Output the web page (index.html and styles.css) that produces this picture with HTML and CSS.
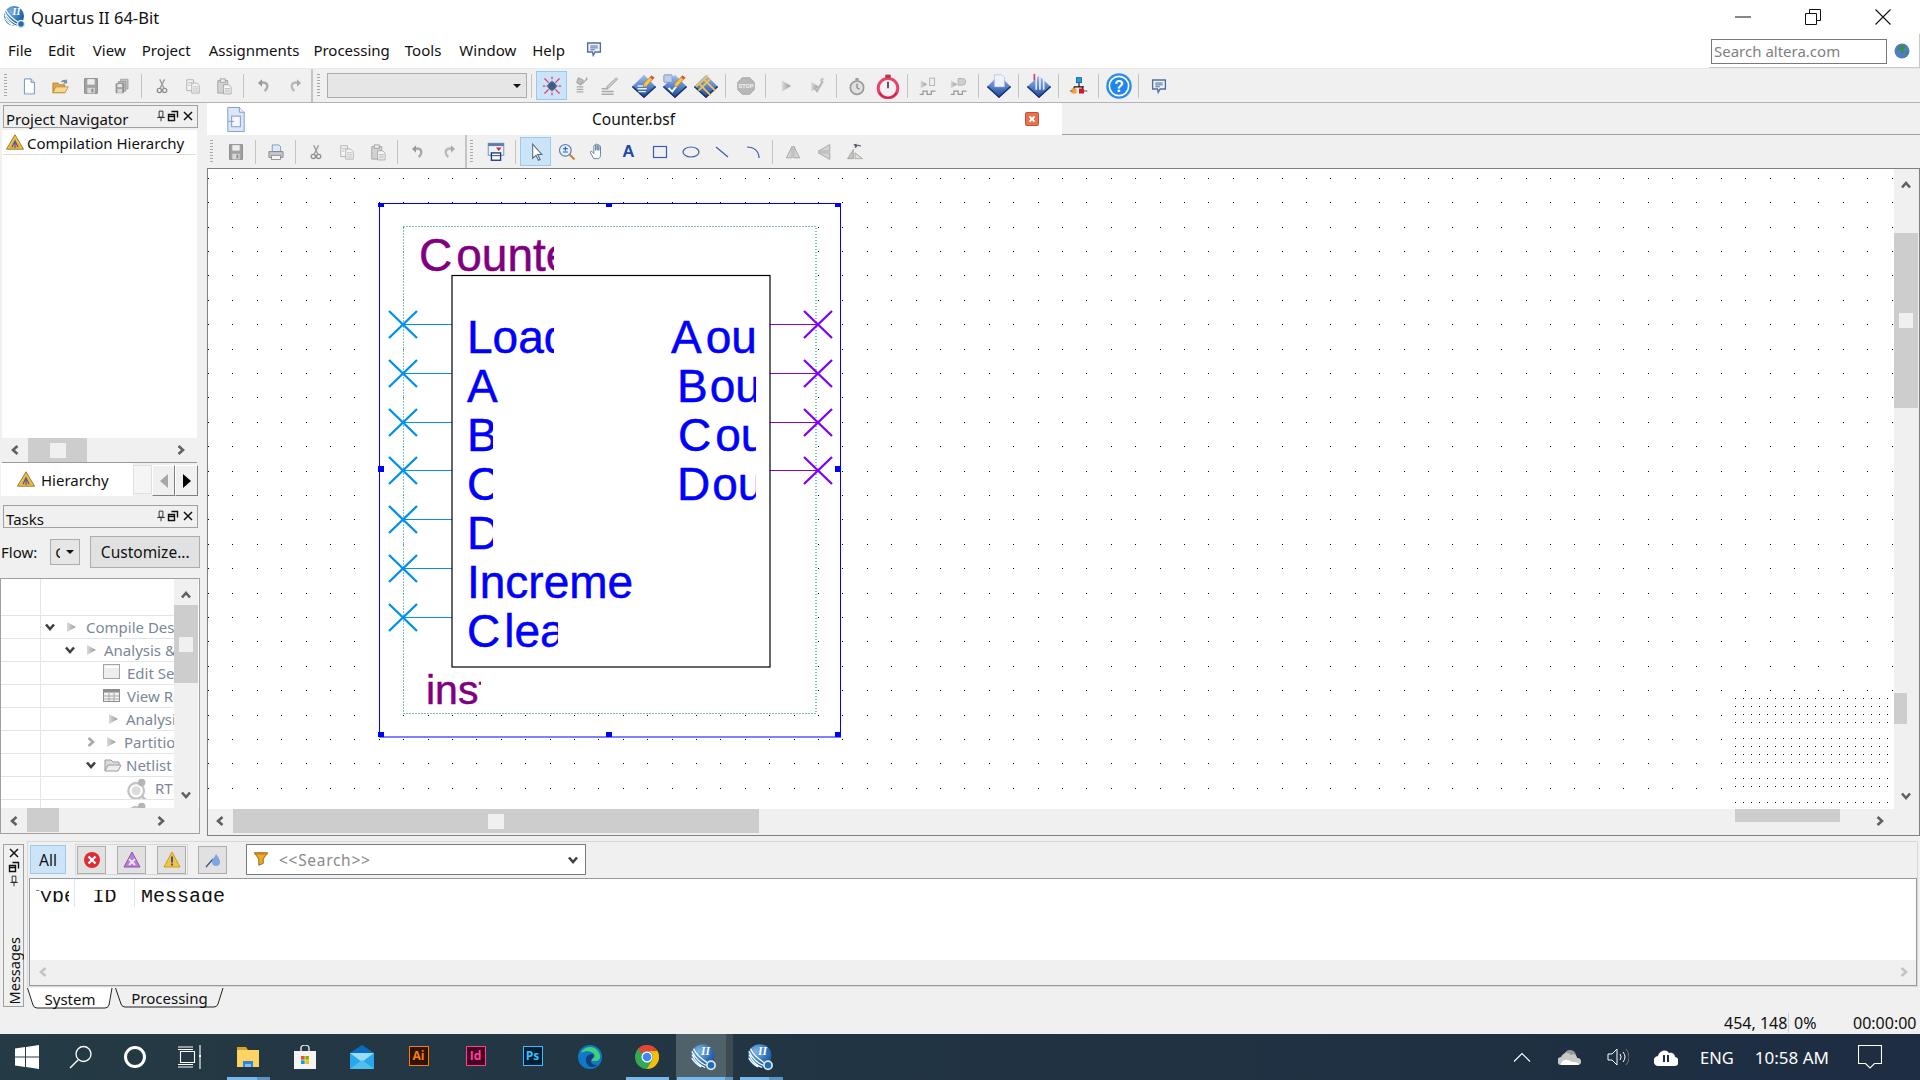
FILE: index.html
```html
<!DOCTYPE html>
<html lang="en">
<head>
<meta charset="utf-8">
<title>Quartus II 64-Bit</title>
<link rel="stylesheet" href="styles.css">
</head>
<body>
<svg class="defs" aria-hidden="true">
<defs>
<radialGradient id="gBlue" cx="35%" cy="30%" r="80%"><stop offset="0" stop-color="#7fb4e4"/><stop offset=".6" stop-color="#2f74b8"/><stop offset="1" stop-color="#134f8f"/></radialGradient>
<linearGradient id="gDia" x1="0" y1="0" x2="0" y2="1"><stop offset="0" stop-color="#a4c0ee"/><stop offset=".55" stop-color="#4f7ccc"/><stop offset="1" stop-color="#20417f"/></linearGradient>
<linearGradient id="gTri" x1="0" y1="0" x2="1" y2="0"><stop offset="0" stop-color="#dcdcdc"/><stop offset="1" stop-color="#969696"/></linearGradient>
<symbol id="i-quartus" viewBox="0 0 24 24"><circle cx="11" cy="11" r="10" fill="url(#gBlue)"/><path d="M2 10c2 5 6 9 11 11M1.500 7c3 6 7 10 13 12.500M3 5c3 6 7 9 12 12M1.500 13c2 3 5 6 8 7.500" stroke="#fff" stroke-width="1.100" fill="none"/><circle cx="18" cy="19" r="3.500" fill="#1c6fb5" stroke="#dfe5ea" stroke-width="1.500"/><text x="9.500" y="10" font-family="Liberation Serif" font-weight="700" font-style="italic" font-size="10" fill="#fff">II</text></symbol>
<symbol id="i-new" viewBox="0 0 24 24"><path d="M6.500 3.500h8l4 4v14h-12z" fill="#fff" stroke="#5b7fb5"/><path d="M14.500 3.500v4h4" fill="#dbe6f5" stroke="#5b7fb5"/><path d="M7.500 20.500h10" stroke="#cfdcef"/></symbol>
<symbol id="i-open" viewBox="0 0 24 24"><path d="M3.500 20V8.500h6l2 2h6V20z" fill="#e0a94a" stroke="#a97a2c"/><path d="M3.500 20l3.500-7h15l-4 7z" fill="#f6d98d" stroke="#b98b3a"/><path d="M13 8c1-3 3.500-4 6-3l1.500-1.500V9h-5l1.500-1.500c-1.500-.7-3-.2-4 .5z" fill="#7d8fa5"/></symbol>
<symbol id="i-save" viewBox="0 0 24 24"><path d="M5 4h14v16H5z" fill="#a2a2a2" stroke="#858585"/><rect x="8" y="4.500" width="8" height="6" fill="#ededed"/><rect x="8" y="14" width="8" height="6" fill="#d8d8d8"/><rect x="12.500" y="15" width="2" height="4" fill="#8a8a8a"/></symbol>
<symbol id="i-saveall" viewBox="0 0 24 24"><path d="M10 3h10v13H10z" fill="#c2c2c2" stroke="#999"/><path d="M7 6h10v13H7z" fill="#b4b4b4" stroke="#999"/><path d="M4 9h10v12H4z" fill="#a2a2a2" stroke="#858585"/><rect x="6" y="9.500" width="6" height="4" fill="#e8e8e8"/><rect x="6" y="16" width="6" height="5" fill="#d8d8d8"/></symbol>
<symbol id="i-cut" viewBox="0 0 24 24"><path d="M9 3l5.500 12M15.500 3L9.500 15" stroke="#a0a0a0" stroke-width="2" fill="none"/><circle cx="8.500" cy="18" r="2.800" fill="none" stroke="#909090" stroke-width="1.800"/><circle cx="15.500" cy="18" r="2.800" fill="none" stroke="#909090" stroke-width="1.800"/></symbol>
<symbol id="i-copy" viewBox="0 0 24 24"><path d="M4.500 4.500h8v13h-8z" fill="#f4f4f4" stroke="#a8a8a8"/><path d="M10.500 8.500h6l3 3v9h-9z" fill="#f4f4f4" stroke="#a8a8a8"/><path d="M6 8h5M6 11h3M12 13h6M12 15.500h6M12 18h6" stroke="#b4b4b4"/></symbol>
<symbol id="i-paste" viewBox="0 0 24 24"><path d="M4.500 5.500h12v15h-12z" fill="#d2d2d2" stroke="#9c9c9c"/><rect x="7.500" y="3.500" width="6" height="4" fill="#eee" stroke="#999"/><path d="M11.500 10.500h6l3 3v8h-9z" fill="#f7f7f7" stroke="#a0a0a0"/><path d="M13 15h6M13 17h6M13 19h6" stroke="#b4b4b4"/></symbol>
<symbol id="i-undo" viewBox="0 0 24 24"><path d="M6 7.500c6-2 11 0 11 5 0 3-1.500 5-4 7" fill="none" stroke="#a8a8a8" stroke-width="3.500"/><path d="M9 2L3 7.500 9 13z" fill="#999"/></symbol>
<symbol id="i-redo" viewBox="0 0 24 24"><path d="M18 7.500c-6-2-11 0-11 5 0 3 1.500 5 4 7" fill="none" stroke="#b8b8b8" stroke-width="3.500"/><path d="M15 2l6 5.500L15 13z" fill="#aaa"/></symbol>
<symbol id="i-target" viewBox="0 0 24 24"><path d="M12 5l7 7-7 7-7-7z" fill="#6d819f"/><circle cx="12" cy="12" r="4.500" fill="#3e5a85"/><path d="M3 3l5 5M21 3l-5 5M3 21l5-5M21 21l-5-5M12 1v3M12 20v3M1 12h3M20 12h3" stroke="#f0306a" stroke-width="1.500"/></symbol>
<symbol id="i-chip" viewBox="0 0 24 24"><path d="M10 2l6 3-3 6-5-3z" fill="#bcbcbc" stroke="#999"/><path d="M19 2l1.500 1.500-6 6" stroke="#a8a8a8" stroke-width="1.500" fill="none"/><path d="M8 13h8M8 16h8M8 19h8" stroke="#a8a8a8" stroke-width="1.500"/></symbol>
<symbol id="i-pen" viewBox="0 0 24 24"><path d="M20 3l1.500 1.500L12 14l-3 1 1-3z" fill="#c8c8c8" stroke="#999" stroke-width=".8"/><path d="M4 15h7M4 18h13M4 21h13" stroke="#aaa" stroke-width="1.500"/></symbol>
<symbol id="i-d1" viewBox="0 0 28 28"><path d="M14 2L27 15 14 27 1 15z" fill="url(#gDia)"/><path d="M14 27L1 15l1-1 12 11 12-11 1 1z" fill="#193267"/><path d="M7 14h10M7 17h10M8 20h8" stroke="#e8eef8" stroke-width="1.500"/><path d="M22 3l3 2-8 9-4 1 1-4z" fill="#f6c644" stroke="#9b6d10" stroke-width=".6"/><path d="M22 3l3 2-1.500 2-3-2z" fill="#e24a4a"/></symbol>
<symbol id="i-d2" viewBox="0 0 28 28"><path d="M14 2L27 15 14 27 1 15z" fill="url(#gDia)"/><path d="M14 27L1 15l1-1 12 11 12-11 1 1z" fill="#193267"/><rect x="2" y="2" width="9" height="8" rx="1" fill="#bfcde8" stroke="#7f95bf"/><path d="M7 16l4 4 6-8" fill="none" stroke="#fff" stroke-width="2"/><path d="M22 3l3 2-8 9-4 1 1-4z" fill="#f6c644" stroke="#9b6d10" stroke-width=".6"/><path d="M22 3l3 2-1.500 2-3-2z" fill="#e24a4a"/></symbol>
<symbol id="i-d3" viewBox="0 0 28 28"><path d="M14 2L27 15 14 27 1 15z" fill="url(#gDia)"/><path d="M14 27L1 15l1-1 12 11 12-11 1 1z" fill="#193267"/><path d="M6 11l13 13M11 6l13 13M6 19L19 6M3 15L16 3" stroke="#f2c44a" stroke-width="2" fill="none"/></symbol>
<symbol id="i-stop" viewBox="0 0 24 24"><path d="M8 3h8l5 5v8l-5 5H8l-5-5V8z" fill="#b8b8b8" stroke="#a4a4a4"/><text x="12" y="14" text-anchor="middle" font-family="Liberation Sans" font-size="6" font-weight="700" fill="#f4f4f4">STOP</text></symbol>
<symbol id="i-play" viewBox="0 0 24 24"><path d="M7 5l11 7-11 7z" fill="url(#gTri)"/></symbol>
<symbol id="i-check" viewBox="0 0 24 24"><path d="M5 7l9 6-9 6z" fill="url(#gTri)"/><path d="M9 14l3 4 7-12" fill="none" stroke="#b4b4b4" stroke-width="2.500"/><path d="M18 2l2.500 1.500-3 3-2.500-1z" fill="#c2c2c2"/></symbol>
<symbol id="i-timer" viewBox="0 0 24 24"><circle cx="12" cy="14" r="8" fill="#e0e0e0" stroke="#9a9a9a" stroke-width="2"/><rect x="10" y="2.500" width="4" height="3" fill="#9a9a9a"/><path d="M12 9v5l3 2" stroke="#888" stroke-width="1.500" fill="none"/></symbol>
<symbol id="i-timer2" viewBox="0 0 24 24"><circle cx="12" cy="14" r="9" fill="#f7f0f3" stroke="#e8456c" stroke-width="2.800"/><rect x="9.500" y="1.500" width="5" height="3" fill="#b8304f"/><path d="M12 8v6" stroke="#555" stroke-width="1.800"/><path d="M4 18a9 9 0 0016 0" stroke="#c7214a" stroke-width="1.500" fill="none"/></symbol>
<symbol id="i-wave1" viewBox="0 0 24 24"><path d="M3 5l8 5-8 5z" fill="url(#gTri)"/><rect x="14" y="2.500" width="6" height="9" fill="#eee" stroke="#aaa"/><path d="M2 22h4v-4h5v4h5v-4h5" fill="none" stroke="#999" stroke-width="1.500"/></symbol>
<symbol id="i-wave2" viewBox="0 0 24 24"><path d="M2 5l8 5-8 5z" fill="url(#gTri)"/><path d="M11 3h5a4 4 0 010 8h-5z" fill="#d0d0d0" stroke="#aaa"/><path d="M2 22h4v-4h5v4h5v-4h5" fill="none" stroke="#999" stroke-width="1.500"/></symbol>
<symbol id="i-p1" viewBox="0 0 28 28"><path d="M14 2L27 15 14 27 1 15z" fill="url(#gDia)"/><path d="M14 27L1 15l1-1 12 11 12-11 1 1z" fill="#193267"/><path d="M9 2h8l3 3v10H9z" fill="#eef2fa" stroke="#9bb0d6" stroke-width=".6"/></symbol>
<symbol id="i-p2" viewBox="0 0 28 28"><path d="M14 3L27 15 14 27 1 15z" fill="url(#gDia)"/><path d="M14 27L1 15l1-1 12 11 12-11 1 1z" fill="#193267"/><path d="M11 1v17M15 1v17M19 5v13" stroke="#e6edf8" stroke-width="1.800"/><path d="M9 1v7" stroke="#d9425e" stroke-width="1.800"/></symbol>
<symbol id="i-hier" viewBox="0 0 24 24"><rect x="9" y="2" width="6" height="6" fill="#1f9be0" stroke="#0b5e96"/><path d="M12 8v5M6 13h12M6 13v3M16 13v3" stroke="#111" stroke-width="1.300" fill="none"/><rect x="3" y="15" width="6" height="6" fill="#f5a030"/><rect x="12" y="15" width="6" height="6" fill="#e0122e"/><path d="M1 18h3M18 18h4" stroke="#333"/></symbol>
<symbol id="i-help" viewBox="0 0 28 28"><circle cx="14" cy="14" r="12.500" fill="#fff" stroke="#2b8cf0" stroke-width="2.500"/><circle cx="14" cy="14" r="9.500" fill="#1e86ec"/><text x="14" y="20" text-anchor="middle" font-family="Liberation Sans" font-size="17" font-weight="700" fill="#fff">?</text></symbol>
<symbol id="i-chat" viewBox="0 0 24 24"><path d="M3.500 4h17v12h-7l-2.500 4.500-1-4.500h-6.500z" fill="#eef3fb" stroke="#4f6f9c" stroke-width="1.800"/><path d="M7 8h10M7 10.500h10M7 13h6" stroke="#3f5f8c" stroke-width="1.200"/></symbol>
<symbol id="i-print" viewBox="0 0 24 24"><path d="M7.500 3.500h8l2 2v6h-10z" fill="#dfe8f5" stroke="#7490bb"/><path d="M3.500 11.500h17v7h-17z" fill="#c7c7c7" stroke="#7f7f7f"/><rect x="6.500" y="16" width="11" height="5" fill="#f4f4f4" stroke="#888"/></symbol>
<symbol id="i-sym" viewBox="0 0 24 24"><rect x="3.500" y="2.500" width="17" height="13" fill="#eef3fb" stroke="#7289b0"/><rect x="3.500" y="2.500" width="17" height="3" fill="#5d7cae"/><path d="M12 7h6l-3 4z" fill="#d6243e"/><rect x="7" y="13" width="10" height="8" fill="#fff" stroke="#1d3f78" stroke-width="1.500"/><path d="M7 16h10" stroke="#1d3f78"/></symbol>
<symbol id="i-cursor" viewBox="0 0 24 24"><path d="M8 2.500v17l4-3.500 3 6 2-1-3-6h5z" fill="#fff" stroke="#5c6b82" stroke-width="1.300"/></symbol>
<symbol id="i-zoom" viewBox="0 0 24 24"><circle cx="10" cy="10" r="7" fill="#e5f0fb" stroke="#5b7fb5" stroke-width="1.400"/><path d="M7 8h6M7 12h6M10 5.500v5" stroke="#2b5597" stroke-width="1.300"/><path d="M15 15l6 6" stroke="#c9853a" stroke-width="2.500"/></symbol>
<symbol id="i-hand" viewBox="0 0 24 24"><path d="M7 20l-4-7c-.8-1.500 1-2.500 2-1.500l2 2.500V5c0-1.500 2-1.500 2 0v5-6.500c0-1.500 2-1.500 2 0V10 4c0-1.500 2-1.500 2 0v6-4.500c0-1.500 2-1.500 2 0V15c0 3-1 4-2 5z" fill="#fff" stroke="#6d83a6" stroke-width="1.200"/></symbol>
<symbol id="i-rect" viewBox="0 0 24 24"><rect x="5.500" y="6.500" width="13" height="11" fill="none" stroke="#3d5cab" stroke-width="1.200"/></symbol>
<symbol id="i-ell" viewBox="0 0 24 24"><ellipse cx="12" cy="12" rx="8" ry="5" fill="none" stroke="#3d5cab" stroke-width="1.200"/></symbol>
<symbol id="i-line" viewBox="0 0 24 24"><path d="M6 7l12 10" stroke="#3d5cab" stroke-width="1.200"/></symbol>
<symbol id="i-arc" viewBox="0 0 24 24"><path d="M6 7c7 0 12 4 12 11" fill="none" stroke="#3d5cab" stroke-width="1.200"/></symbol>
<symbol id="i-fliph" viewBox="0 0 24 24"><path d="M11 5v14H4zM13 5v14h7z" fill="#d2d2d2" stroke="#a0a0a0"/></symbol>
<symbol id="i-flipv" viewBox="0 0 24 24"><path d="M19 3v8H5zM19 13v8L5 13z" fill="#d2d2d2" stroke="#a0a0a0"/></symbol>
<symbol id="i-rot" viewBox="0 0 24 24"><path d="M10 9v11H3z" fill="#c4c4c4" stroke="#a0a0a0"/><path d="M12 13v7h9z" fill="#e0e0e0" stroke="#a0a0a0"/><path d="M12 7c1-3 4-4 7-2" fill="none" stroke="#667" stroke-width="1.500"/><path d="M10 3l4-1 0 5z" fill="#556"/></symbol>
<symbol id="i-warn" viewBox="0 0 18 16"><path d="M9 .8l8.500 14.400H.5z" fill="#f3c33b" stroke="#8d7a4a"/><path d="M9 4l5.500 10h-11z" fill="#f5a72e"/><path d="M6 13l3-6 3 6M9 8v6" stroke="#3b5bb5" stroke-width="1.100" fill="none"/></symbol>
<symbol id="i-filefile" viewBox="0 0 24 28"><path d="M3.500 1.500h12l5 5v20h-17z" fill="#dce7f6" stroke="#7e9bc8"/><path d="M15.500 1.500v5h5" fill="#eef3fb" stroke="#7e9bc8"/><rect x="7.500" y="10.500" width="9" height="11" fill="#f4f7fc" stroke="#7e9bc8"/><path d="M4 16h6" stroke="#7e9bc8"/></symbol>
<symbol id="i-closetab" viewBox="0 0 14 14"><rect x=".5" y=".5" width="13" height="13" rx="1" fill="#e9714f" stroke="#c54f36"/><path d="M4.500 4.500l5 5M9.500 4.500l-5 5" stroke="#fff" stroke-width="2"/></symbol>
<symbol id="i-globe" viewBox="0 0 16 16"><circle cx="8" cy="8" r="7.500" fill="#4f7ccc"/><path d="M4 4l6-2.500 1.500 3-2.500 2 1.500 2-2.500 3-1-3.500-3-1z" fill="#3d9143"/><path d="M11.500 9l2.500-1.500 0 3-2.500 2.500z" fill="#3d9143"/></symbol>
<symbol id="i-pin" viewBox="0 0 12 16"><path d="M3.500 1.500h5v8h-5zM1 10h10M6 10v5" fill="none" stroke="#222" stroke-width="1.200"/></symbol>
<symbol id="i-float" viewBox="0 0 12 12"><path d="M4.500 1.500h6v6M1.500 4.500h6v6h-6zM1.500 6.500h6" fill="none" stroke="#111" stroke-width="1.400"/></symbol>
<symbol id="i-x" viewBox="0 0 12 12"><path d="M2 2l8 8M10 2l-8 8" stroke="#111" stroke-width="1.500"/></symbol>
<symbol id="i-chev" viewBox="0 0 14 14"><path d="M3 9.500l4-4.500 4 4.500" fill="none" stroke="currentColor" stroke-width="2.600"/></symbol>
<symbol id="i-tri" viewBox="0 0 12 12"><path d="M2 1l9 5-9 5z" fill="url(#gTri)"/></symbol>
<symbol id="i-win" viewBox="0 0 18 18"><rect x=".5" y=".5" width="16" height="14" fill="#eee" stroke="#a4a4a4"/><rect x="2" y="2" width="14" height="2" fill="#fff"/></symbol>
<symbol id="i-table" viewBox="0 0 18 18"><rect x=".5" y="2.500" width="16" height="12" fill="#f2f2f2" stroke="#8e8e8e"/><rect x=".5" y="2.500" width="16" height="3" fill="#8e8e8e"/><path d="M1 9h15M1 12h15M6 6v8M11 6v8" stroke="#a8a8a8"/></symbol>
<symbol id="i-foldr" viewBox="0 0 18 18"><path d="M1 15V4h6l2 2h6v3" fill="#ddd" stroke="#9a9a9a"/><path d="M1 15l3-6h13l-3 6z" fill="#eee" stroke="#9a9a9a"/></symbol>
<symbol id="i-rtl" viewBox="0 0 26 26"><circle cx="11" cy="15" r="8.500" fill="none" stroke="#c4c4c4" stroke-width="2.500"/><circle cx="11" cy="15" r="5" fill="#dcdcdc"/><circle cx="17" cy="6" r="4" fill="#b5b5b5"/><path d="M17 21l5 4" stroke="#bbb" stroke-width="2.500"/></symbol>
<symbol id="i-funnel" viewBox="0 0 18 18"><path d="M1.500 2h15l-5 7v5l-5 2V9z" fill="#f0a823" stroke="#8a6016"/><path d="M1.500 2h15v2h-15z" fill="#cf7f1a"/></symbol>
<symbol id="i-err" viewBox="0 0 18 18"><circle cx="9" cy="9" r="8" fill="#e02a36"/><path d="M5.500 5.500l7 7M12.500 5.500l-7 7" stroke="#fff" stroke-width="2.400"/></symbol>
<symbol id="i-crit" viewBox="0 0 18 18"><path d="M9 1l8 15H1z" fill="#b77fd6" stroke="#8b55a8"/><path d="M6 8l6 6M12 8l-6 6" stroke="#efe2f6" stroke-width="1.800"/></symbol>
<symbol id="i-warn2" viewBox="0 0 18 18"><path d="M9 1l8 15H1z" fill="#f8c33a" stroke="#cf9a1a"/><rect x="8" y="5.500" width="2" height="6" fill="#2a56b8"/><rect x="8" y="12.500" width="2" height="2" fill="#2a56b8"/></symbol>
<symbol id="i-sup" viewBox="0 0 18 18"><path d="M2 16L9 8" stroke="#3a557f" stroke-width="1.300"/><path d="M12 3c2 3 4 5 4 8a4 4 0 01-8 0c0-3 3-5 4-8z" fill="#7fa6e0"/></symbol>
<symbol id="t-start" viewBox="0 0 24 24"><path d="M0 3.500l10-1.400V11.500H0zM11 2L24 0v11.500H11zM0 12.500h10v9.400L0 20.500zM11 12.500h13V24l-13-2z" fill="#fff"/></symbol>
<symbol id="t-search" viewBox="0 0 24 24"><circle cx="14.500" cy="9" r="7.500" fill="none" stroke="#fff" stroke-width="1.300"/><path d="M9 15l-8 8" stroke="#fff" stroke-width="1.500"/></symbol>
<symbol id="t-ring" viewBox="0 0 24 24"><circle cx="12" cy="12" r="9.500" fill="none" stroke="#fff" stroke-width="3"/></symbol>
<symbol id="t-view" viewBox="0 0 24 24"><path d="M3.500 6.500h14v11h-14zM1 2h15M1 4.500h15M1 19.500h15M1 22h15M23 0v9M23 13v11" stroke="#fff" stroke-width="1.100" fill="none"/><rect x="22" y="9.500" width="2" height="3" fill="#fff"/></symbol>
<symbol id="t-explorer" viewBox="0 0 24 24"><path d="M1 2h9l2 3H1z" fill="#d8a12a"/><rect x="1" y="5" width="22" height="17" fill="#fbd463"/><path d="M7 22v-6h10v6z" fill="#2e86d8"/><rect x="9" y="19" width="6" height="3" fill="#7fc2f2"/></symbol>
<symbol id="t-store" viewBox="0 0 24 24"><rect x="1" y="6" width="22" height="18" fill="#f4f4f4"/><path d="M8 6V3a4 3 0 018 0v3" fill="none" stroke="#ddd" stroke-width="1.500"/><rect x="8" y="11" width="3.700" height="3.700" fill="#f25022"/><rect x="12.300" y="11" width="3.700" height="3.700" fill="#7fba00"/><rect x="8" y="15.300" width="3.700" height="3.700" fill="#00a4ef"/><rect x="12.300" y="15.300" width="3.700" height="3.700" fill="#ffb900"/></symbol>
<symbol id="t-mail" viewBox="0 0 24 24"><path d="M12 0l12 8H0z" fill="#0a6cc0"/><rect y="8" width="24" height="16" fill="#28a8ea"/><path d="M0 8l12 9 12-9" fill="#9adcf7"/><path d="M0 24l12-9 12 9z" fill="#50bfef"/></symbol>
<symbol id="t-edge" viewBox="0 0 24 24"><circle cx="12" cy="12" r="12" fill="#0f78c8"/><path d="M3 8c3-7 13-8 17-2 3 4 3 9-1 10h-6c1-3 5-3 3-7-2-3-8-4-13-1z" fill="#3ed07a"/><path d="M8 14c0-3 3-5 7-5 2 3-1 4-2 7 0 3 3 4 6 4-5 5-12 0-11-6z" fill="#173c7a"/></symbol>
<symbol id="t-chrome" viewBox="0 0 24 24"><circle cx="12" cy="12" r="12" fill="#34a853"/><path d="M12 0a12 12 0 0110.400 6H12a6 6 0 00-5.200 3L3 3.500A12 12 0 0112 0z" fill="#ea4335"/><path d="M22.400 6A12 12 0 0112 24l5.200-9A6 6 0 0012 6z" fill="#fbbc05"/><circle cx="12" cy="12" r="5.500" fill="#fff"/><circle cx="12" cy="12" r="4.300" fill="#4285f4"/></symbol>
<symbol id="t-up" viewBox="0 0 18 10"><path d="M1 9.500l8-8 8 8" fill="none" stroke="#fff" stroke-width="1.100"/></symbol>
<symbol id="t-cloud1" viewBox="0 0 24 16"><path d="M6 8a6 6 0 0112-2l-12 6z" fill="#999"/><path d="M4 16a4 4 0 01-1-8c2-4 7-6 10-2 3-2 6 0 6 3a3.500 3.500 0 011 7z" fill="#c8c8c8"/><path d="M3 16c0-3 3-6 7-5l4 2c3 0 7 0 7 3z" fill="#fff"/></symbol>
<symbol id="t-speaker" viewBox="0 0 22 18"><path d="M1 6h4l5-5v16l-5-5H1z" fill="none" stroke="#fff" stroke-width="1"/><path d="M13 6a5 5 0 010 6M16 4a8 8 0 010 10" fill="none" stroke="#fff" stroke-width="1"/><path d="M19 1a12 12 0 010 16" fill="none" stroke="#777" stroke-width="1"/></symbol>
<symbol id="t-cloud2" viewBox="0 0 24 18"><path d="M5 18a5 5 0 01-1-10c1-5 8-8 11-3 4-1 6 2 6 4a4.500 4.500 0 01-1 9z" fill="#fff"/><rect x="9" y="7" width="2" height="7" fill="#1f2d41"/><rect x="13" y="7" width="2" height="7" fill="#1f2d41"/></symbol>
<symbol id="t-note" viewBox="0 0 24 24"><path d="M.5.500h23v18h-7l-4.500 4.500-4.500-4.500h-7z" fill="none" stroke="#fff" stroke-width="1.100"/></symbol>
<symbol id="w-min" viewBox="0 0 16 16"><path d="M0 8h16" stroke="#111" stroke-width="1"/></symbol>
<symbol id="w-res" viewBox="0 0 16 16"><path d="M.5 4.500h11v11H.5zM4.500 4V.5h11v11H12" fill="none" stroke="#111"/></symbol>
<symbol id="w-close" viewBox="0 0 16 16"><path d="M.5.500l15 15M15.500.500l-15 15" stroke="#111" stroke-width="1.100"/></symbol>
<pattern id="pDots" x="110" y="56" width="122" height="122" patternUnits="userSpaceOnUse"><path d="M0 0h1v1H0zM25 0h1v1h-1zM49 0h1v1h-1zM74 0h1v1h-1zM98 0h1v1h-1zM0 24h1v1H0zM25 24h1v1h-1zM49 24h1v1h-1zM74 24h1v1h-1zM98 24h1v1h-1zM0 49h1v1H0zM25 49h1v1h-1zM49 49h1v1h-1zM74 49h1v1h-1zM98 49h1v1h-1zM0 73h1v1H0zM25 73h1v1h-1zM49 73h1v1h-1zM74 73h1v1h-1zM98 73h1v1h-1zM0 97h1v1H0zM25 97h1v1h-1zM49 97h1v1h-1zM74 97h1v1h-1zM98 97h1v1h-1z" fill="#000"/></pattern>
<pattern id="pFine" x="1735" y="698" width="8" height="8" patternUnits="userSpaceOnUse"><rect width="1" height="1" fill="#000"/></pattern>
<clipPath id="cCounter"><rect x="400" y="225" width="154" height="60"/></clipPath>
<clipPath id="cLoad"><rect x="460" y="310" width="94" height="50"/></clipPath>
<clipPath id="cB"><rect x="460" y="410" width="33" height="150"/></clipPath>
<clipPath id="cInc"><rect x="460" y="560" width="175" height="44"/></clipPath>
<clipPath id="cClear"><rect x="460" y="605" width="98" height="50"/></clipPath>
<clipPath id="cOut"><rect x="660" y="310" width="96" height="200"/></clipPath>
<clipPath id="cInst"><rect x="420" y="670" width="61" height="40"/></clipPath>
</defs>
</svg>

<div class="app">
  <header class="titlebar">
    <svg class="logo"><use href="#i-quartus"/></svg>
    <span class="app-title">Quartus II 64-Bit</span>
    <div class="winctl">
      <svg class="wbtn"><use href="#w-min"/></svg>
      <svg class="wbtn"><use href="#w-res"/></svg>
      <svg class="wbtn"><use href="#w-close"/></svg>
    </div>
  </header>

  <nav class="menubar">
    <span class="mi m-file">File</span><span class="mi m-edit">Edit</span><span class="mi m-view">View</span><span class="mi m-project">Project</span><span class="mi m-assign">Assignments</span><span class="mi m-proc">Processing</span><span class="mi m-tools">Tools</span><span class="mi m-window">Window</span><span class="mi m-help">Help</span>
    <svg class="ic18 m-chat"><use href="#i-chat"/></svg>
    <div class="searchwrap">
      <div class="searchbox">Search altera.com</div>
      <svg class="globe"><use href="#i-globe"/></svg>
    </div>
  </nav>

  <div class="toolbar main-tb">
    <i class="grip"></i>
    <span class="slot first"><svg class="s20"><use href="#i-new"/></svg></span>
    <span class="slot"><svg class="s20"><use href="#i-open"/></svg></span>
    <span class="slot"><svg class="s22"><use href="#i-save"/></svg></span>
    <span class="slot"><svg class="s18"><use href="#i-saveall"/></svg></span>
    <i class="sep"></i>
    <span class="slot"><svg class="s18"><use href="#i-cut"/></svg></span>
    <span class="slot"><svg class="s20"><use href="#i-copy"/></svg></span>
    <span class="slot"><svg class="s20"><use href="#i-paste"/></svg></span>
    <i class="sep"></i>
    <span class="slot"><svg class="s16"><use href="#i-undo"/></svg></span>
    <span class="slot"><svg class="s16"><use href="#i-redo"/></svg></span>
    <i class="tb-break"></i><i class="grip g2"></i>
    <div class="combo"><i class="combo-arrow"></i></div>
    <i class="sep"></i>
    <span class="slot on"><svg class="s20"><use href="#i-target"/></svg></span>
    <span class="slot narrow"><svg class="s20"><use href="#i-chip"/></svg></span>
    <span class="slot"><svg class="s22"><use href="#i-pen"/></svg></span>
    <span class="slot push"><svg class="s26"><use href="#i-d1"/></svg></span>
    <span class="slot"><svg class="s26"><use href="#i-d2"/></svg></span>
    <span class="slot"><svg class="s26"><use href="#i-d3"/></svg></span>
    <i class="sep"></i>
    <span class="slot"><svg class="s22"><use href="#i-stop"/></svg></span>
    <i class="sep"></i>
    <span class="slot"><svg class="s20"><use href="#i-play"/></svg></span>
    <span class="slot"><svg class="s20"><use href="#i-check"/></svg></span>
    <i class="sep"></i>
    <span class="slot"><svg class="s20"><use href="#i-timer"/></svg></span>
    <span class="slot"><svg class="s26"><use href="#i-timer2"/></svg></span>
    <i class="sep"></i>
    <span class="slot"><svg class="s20"><use href="#i-wave1"/></svg></span>
    <span class="slot"><svg class="s20"><use href="#i-wave2"/></svg></span>
    <i class="sep"></i>
    <span class="slot"><svg class="s26"><use href="#i-p1"/></svg></span>
    <i class="sep"></i>
    <span class="slot"><svg class="s26"><use href="#i-p2"/></svg></span>
    <i class="sep"></i>
    <span class="slot"><svg class="s20"><use href="#i-hier"/></svg></span>
    <i class="sep"></i>
    <span class="slot"><svg class="s26"><use href="#i-help"/></svg></span>
    <i class="sep"></i>
    <span class="slot"><svg class="ic18"><use href="#i-chat"/></svg></span>
  </div>

  <main class="workspace">
    <aside class="left">
      <div class="dock-head">
        <span class="dock-title">Project Navigator</span>
        <span class="dock-tools"><svg class="dt"><use href="#i-pin"/></svg><svg class="dt"><use href="#i-float"/></svg><svg class="dt"><use href="#i-x"/></svg></span>
      </div>
      <div class="nav-list">
        <div class="nav-row"><svg class="warn"><use href="#i-warn"/></svg><span>Compilation Hierarchy</span></div>
      </div>
      <div class="hbar nav-bar">
        <svg class="chev left-c c1"><use href="#i-chev"/></svg>
        <span class="thumb t-nav"><i class="handle"></i></span>
        <svg class="chev right-c c2"><use href="#i-chev"/></svg>
      </div>
      <div class="nav-tabs">
        <div class="nav-tab"><svg class="warn"><use href="#i-warn"/></svg><span>Hierarchy</span></div>
        <div class="nav-tab2"></div>
        <div class="tabarrow"><i class="tri-left"></i></div>
        <div class="tabarrow"><i class="tri-right"></i></div>
      </div>
      <div class="dock-head tasks-head">
        <span class="dock-title">Tasks</span>
        <span class="dock-tools"><svg class="dt"><use href="#i-pin"/></svg><svg class="dt"><use href="#i-float"/></svg><svg class="dt"><use href="#i-x"/></svg></span>
      </div>
      <div class="flow-row">
        <span>Flow:</span>
        <div class="flow-combo"><span class="flow-c">C</span><i class="combo-arrow"></i></div>
        <div class="btn-custom">Customize...</div>
      </div>
      <div class="taskbox">
        <div class="task-inner">
          <div class="task-rows">
            <div class="trow thead"><span class="c0"></span><span class="c1-cell"></span></div>
            <div class="trow"><span class="c0"></span><span class="c1-cell p50"><svg class="chev14 down dark"><use href="#i-chev"/></svg><svg class="tri ml8"><use href="#i-tri"/></svg><span class="tl t86">Compile Design</span></span></div>
            <div class="trow"><span class="c0"></span><span class="c1-cell p70"><svg class="chev14 down dark"><use href="#i-chev"/></svg><svg class="tri ml8"><use href="#i-tri"/></svg><span class="tl">Analysis &amp; Synthesis</span></span></div>
            <div class="trow"><span class="c0"></span><span class="c1-cell p104"><svg class="ic16"><use href="#i-win"/></svg><span class="tl">Edit Settings</span></span></div>
            <div class="trow"><span class="c0"></span><span class="c1-cell p104"><svg class="ic16"><use href="#i-table"/></svg><span class="tl">View Report</span></span></div>
            <div class="trow"><span class="c0"></span><span class="c1-cell p107"><svg class="tri"><use href="#i-tri"/></svg><span class="tl">Analysis</span></span></div>
            <div class="trow"><span class="c0"></span><span class="c1-cell p90"><svg class="chev14 right pale"><use href="#i-chev"/></svg><svg class="tri ml6"><use href="#i-tri"/></svg><span class="tl">Partition</span></span></div>
            <div class="trow"><span class="c0"></span><span class="c1-cell p90b"><svg class="chev14 down dark"><use href="#i-chev"/></svg><svg class="ic16 ml4"><use href="#i-foldr"/></svg><span class="tl">Netlist Viewers</span></span></div>
            <div class="trow"><span class="c0"></span><span class="c1-cell p125"><svg class="ic24"><use href="#i-rtl"/></svg><span class="tl tnarrow">RTL Viewer</span></span></div>
            <div class="trow last"><span class="c0"></span><span class="c1-cell p125"><svg class="ic24"><use href="#i-rtl"/></svg><span class="tl tnarrow">State</span></span></div>
          </div>
          <div class="vbar task-v">
            <svg class="chev up-c"><use href="#i-chev"/></svg>
            <span class="thumb t-taskv"><i class="handle"></i></span>
            <svg class="chev down-c"><use href="#i-chev"/></svg>
          </div>
        </div>
        <div class="hbar task-h">
          <svg class="chev left-c c3"><use href="#i-chev"/></svg>
          <span class="thumb t-taskh"></span>
          <svg class="chev right-c c4"><use href="#i-chev"/></svg>
        </div>
      </div>
    </aside>

    <section class="editor">
      <div class="tabstrip">
        <div class="doc-tab">
          <svg class="filefile"><use href="#i-filefile"/></svg>
          <span class="doc-name">Counter.bsf</span>
          <svg class="closetab"><use href="#i-closetab"/></svg>
        </div>
      </div>
      <div class="toolbar edit-tb">
        <i class="grip"></i>
        <span class="slot first2"><svg class="s22"><use href="#i-save"/></svg></span>
        <i class="sep"></i>
        <span class="slot"><svg class="s20"><use href="#i-print"/></svg></span>
        <i class="sep"></i>
        <span class="slot"><svg class="s18"><use href="#i-cut"/></svg></span>
        <span class="slot"><svg class="s20"><use href="#i-copy"/></svg></span>
        <span class="slot"><svg class="s20"><use href="#i-paste"/></svg></span>
        <i class="sep"></i>
        <span class="slot"><svg class="s16"><use href="#i-undo"/></svg></span>
        <span class="slot"><svg class="s16"><use href="#i-redo"/></svg></span>
        <i class="tb-break b2"></i><i class="grip g3"></i>
        <span class="slot"><svg class="s22"><use href="#i-sym"/></svg></span>
        <i class="sep"></i>
        <span class="slot on"><svg class="s20"><use href="#i-cursor"/></svg></span>
        <span class="slot"><svg class="s20"><use href="#i-zoom"/></svg></span>
        <span class="slot"><svg class="s20"><use href="#i-hand"/></svg></span>
        <span class="slot"><span class="tool-a">A</span></span>
        <span class="slot"><svg class="ic"><use href="#i-rect"/></svg></span>
        <span class="slot"><svg class="ic"><use href="#i-ell"/></svg></span>
        <span class="slot"><svg class="ic"><use href="#i-line"/></svg></span>
        <span class="slot"><svg class="ic"><use href="#i-arc"/></svg></span>
        <i class="sep"></i>
        <span class="slot"><svg class="s20"><use href="#i-fliph"/></svg></span>
        <span class="slot"><svg class="s20"><use href="#i-flipv"/></svg></span>
        <span class="slot"><svg class="s20"><use href="#i-rot"/></svg></span>
      </div>
      <div class="canvas-frame">
        <svg class="canvas" viewBox="208 169 1686 640" width="1686" height="640">
          <rect x="208" y="169" width="1686" height="640" fill="url(#pDots)"/>
          <rect x="1735" y="694" width="159" height="115" fill="#fff"/>
          <rect x="1735" y="698" width="154" height="28" fill="url(#pFine)"/>
          <rect x="1735" y="738" width="154" height="28" fill="url(#pFine)"/>
          <rect x="1735" y="778" width="154" height="12" fill="url(#pFine)"/>
          <rect x="1735" y="802" width="154" height="4" fill="url(#pFine)"/>

          <rect class="dotted" x="403.500" y="226.500" width="412.500" height="487"/>
          <rect class="outer" x="379.500" y="203.500" width="461" height="533.500"/>
          <path class="hnd" d="M378 203h6v4h-6zM606 203h6v4h-6zM835 203h6v4h-6zM378 466h6v6h-6zM835 466h6v6h-6zM378 732h6v5h-6zM606 732h6v5h-6zM835 732h6v5h-6z"/>

          <g class="pin-in">
            <path d="M403 324.500h49M403 373.500h49M403 422.500h49M403 470.500h49M403 519.500h49M403 568.500h49M403 617.500h49"/>
            <path class="xx" d="M389 311l28 27M417 311l-28 27M389 360l28 27M417 360l-28 27M389 409l28 27M417 409l-28 27M389 457l28 27M417 457l-28 27M389 506l28 27M417 506l-28 27M389 555l28 27M417 555l-28 27M389 604l28 27M417 604l-28 27"/>
          </g>
          <g class="pin-out">
            <path d="M770 324.500h48M770 373.500h48M770 422.500h48M770 470.500h48"/>
            <path class="xx" d="M804 311l28 27M832 311l-28 27M804 360l28 27M832 360l-28 27M804 409l28 27M832 409l-28 27M804 457l28 27M832 457l-28 27"/>
          </g>
          <rect class="block" x="452" y="275.500" width="318" height="391.500"/>

          <g class="sym-t purple">
            <text x="419" y="271" clip-path="url(#cCounter)" dx="0 4">Counter</text>
            <text class="inst" x="426" y="704" clip-path="url(#cInst)">inst</text>
          </g>
          <g class="sym-t blue">
            <text x="467" y="353" clip-path="url(#cLoad)">Load</text>
            <text x="467" y="402">A</text>
            <text x="467" y="451" clip-path="url(#cB)">B</text>
            <text x="467" y="499.500" clip-path="url(#cB)">C</text>
            <text x="467" y="548.500" clip-path="url(#cB)">D</text>
            <text x="467" y="597.500" clip-path="url(#cInc)">Increment</text>
            <text x="467" y="646.500" clip-path="url(#cClear)" dx="0 4">Clear</text>
            <g clip-path="url(#cOut)">
              <text x="671" y="353" dx="0 4">Aout</text>
              <text x="677" y="402" dx="0 2">Bout</text>
              <text x="678" y="451" dx="0 4">Cout</text>
              <text x="677" y="499.500" dx="0 2">Dout</text>
            </g>
          </g>
        </svg>
        <div class="vbar main-v">
          <svg class="chev up-c"><use href="#i-chev"/></svg>
          <span class="thumb t-mainv"><i class="handle"></i></span>
          <span class="thumb t-mainv2"></span>
          <svg class="chev down-c"><use href="#i-chev"/></svg>
        </div>
        <div class="hbar main-h">
          <svg class="chev left-c c5"><use href="#i-chev"/></svg>
          <span class="thumb t-mainh"><i class="handle"></i></span>
          <span class="thumb t-mainh2"></span>
          <svg class="chev right-c c6"><use href="#i-chev"/></svg>
        </div>
      </div>
    </section>
  </main>

  <section class="messages">
    <div class="msg-side">
      <svg class="dt"><use href="#i-x"/></svg>
      <svg class="dt"><use href="#i-float"/></svg>
      <svg class="dt"><use href="#i-pin"/></svg>
      <span class="msg-vert">Messages</span>
    </div>
    <div class="msg-col">
      <div class="msg-panel">
        <div class="msg-tools">
          <div class="all-btn">All</div>
          <div class="msg-group">
            <span class="fbtn"><svg class="ic18"><use href="#i-err"/></svg></span>
            <span class="fbtn"><svg class="ic18"><use href="#i-crit"/></svg></span>
            <span class="fbtn"><svg class="ic18"><use href="#i-warn2"/></svg></span>
          </div>
          <span class="fbtn solo"><svg class="ic18"><use href="#i-sup"/></svg></span>
          <div class="msg-search">
            <svg class="ic18"><use href="#i-funnel"/></svg>
            <span class="ms-text">&lt;&lt;Search&gt;&gt;</span>
            <svg class="chev14 down dark ms-chev"><use href="#i-chev"/></svg>
          </div>
        </div>
        <div class="msg-table">
          <div class="msg-head">
            <div class="mh mh-type"><span>Type</span></div>
            <div class="mh mh-id"><span>ID</span></div>
            <div class="mh mh-msg"><span>Message</span></div>
          </div>
          <div class="msg-empty"></div>
          <div class="hbar msg-h">
            <svg class="chev left-c pale c7"><use href="#i-chev"/></svg>
            <svg class="chev right-c pale c8"><use href="#i-chev"/></svg>
          </div>
        </div>
      </div>
      <div class="msg-tabs">
        <div class="mtab mt-sys">
          <svg class="mt-shape" viewBox="0 0 86 21"><path d="M.5 0L6 17q1 3 4 3h68q3 0 4-3L85 0" fill="#fff" stroke="#222"/></svg>
          <span>System</span>
        </div>
        <div class="mtab mt-proc">
          <svg class="mt-shape" viewBox="0 0 109 20"><path d="M.5 0L6 16q1 3 4 3h89q3 0 4-3L108 0" fill="#f0f0f0" stroke="#222"/></svg>
          <span>Processing</span>
        </div>
      </div>
    </div>
  </section>

  <footer class="statusbar">
    <span class="st-pos">454, 148</span>
    <span class="st-pct">0%</span>
    <span class="st-time">00:00:00</span>
  </footer>

  <div class="taskbar">
    <span class="tk narrow-tk"><svg class="tk24"><use href="#t-start"/></svg></span>
    <span class="tk narrow-tk"><svg class="tk24"><use href="#t-search"/></svg></span>
    <span class="tk narrow-tk"><svg class="tk24"><use href="#t-ring"/></svg></span>
    <span class="tk narrow-tk"><svg class="tk24"><use href="#t-view"/></svg></span>
    <span class="tk first-wide run run-split"><svg class="tk24"><use href="#t-explorer"/></svg></span>
    <span class="tk"><svg class="tk24"><use href="#t-store"/></svg></span>
    <span class="tk"><svg class="tk24"><use href="#t-mail"/></svg></span>
    <span class="tk"><span class="adobe ai">Ai</span></span>
    <span class="tk"><span class="adobe id">Id</span></span>
    <span class="tk"><span class="adobe ps">Ps</span></span>
    <span class="tk"><svg class="tk24"><use href="#t-edge"/></svg></span>
    <span class="tk run"><svg class="tk24"><use href="#t-chrome"/></svg></span>
    <span class="tk active"><svg class="tk26"><use href="#i-quartus"/></svg></span>
    <span class="tk run run-split2"><svg class="tk26"><use href="#i-quartus"/></svg></span>
    <div class="tray">
      <svg class="tr-up"><use href="#t-up"/></svg>
      <svg class="tr-c1"><use href="#t-cloud1"/></svg>
      <svg class="tr-sp"><use href="#t-speaker"/></svg>
      <svg class="tr-c2"><use href="#t-cloud2"/></svg>
      <span class="tr-eng">ENG</span>
      <span class="tr-clock">10:58 AM</span>
      <svg class="tr-note"><use href="#t-note"/></svg>
    </div>
  </div>
</div>
</body>
</html>
```
FILE: styles.css
```css
* { box-sizing: border-box; }
html, body { margin: 0; padding: 0; }
body { width: 1920px; height: 1080px; overflow: hidden; background: #f0f0f0; color: #111; font: 15px "Noto Sans", "Open Sans", sans-serif; }
i { font-style: normal; display: block; }
svg { display: block; flex: none; }
.defs { position: absolute; width: 0; height: 0; }
.app { width: 1920px; height: 1080px; display: flex; flex-direction: column; }

.titlebar { height: 34px; background: #fff; display: flex; align-items: center; padding-left: 3px; }
.logo { width: 24px; height: 24px; margin-right: 4px; }
.app-title { font-size: 16.500px; }
.winctl { margin-left: auto; display: flex; gap: 54px; padding-right: 29px; }
.wbtn { width: 16px; height: 16px; }

.menubar { height: 34px; background: #fff; position: relative; display: flex; align-items: center; }
.mi { font-size: 15px; position: relative; top: -1px; white-space: nowrap; }
.m-file { margin-left: 8px; }
.m-edit { margin-left: 16px; }
.m-view { margin-left: 18px; }
.m-project { margin-left: 16px; }
.m-assign { margin-left: 18px; }
.m-proc { margin-left: 14px; }
.m-tools { margin-left: 15px; }
.m-window { margin-left: 18px; }
.m-help { margin-left: 16px; }
.m-chat { margin-left: 20px; margin-top: -4px; }
.ic18 { width: 18px; height: 18px; }
.searchwrap { margin-left: auto; width: 211px; height: 34px; display: flex; align-items: center; padding-left: 2px; border-bottom: 1px solid #c8c8c8; border-right: 1px solid #c8c8c8; }
.searchbox { width: 176px; height: 25px; border: 1px solid #7a7a7a; color: #808080; font-size: 15px; line-height: 22px; padding-left: 2px; background: #fff; margin-top: 1px; }
.globe { width: 16px; height: 16px; margin-left: 7px; }

.toolbar { display: flex; align-items: center; background: #f0f0f0; }
.main-tb { height: 35px; border-top: 1px solid #e9e9e9; border-bottom: 1px solid #b4b4b4; margin-top: 0; padding-left: 4px; }
.grip { width: 3px; height: 24px; background-image: repeating-linear-gradient(to bottom, #a8a8a8 0 1px, transparent 1px 3px); }
.slot { width: 31px; height: 29px; display: flex; align-items: center; justify-content: center; flex: none; }
.slot.first { margin-left: 6px; }
.slot.first2 { margin-left: 7px; }
.slot.narrow { width: 26px; }
.slot.push { margin-left: 4px; }
.slot.on { background: #cce4f7; outline: 1px solid #99c9ef; outline-offset: -1px; }
.sep { width: 9px; height: 24px; flex: none; background: linear-gradient(#c4c4c4, #c4c4c4) center / 1px 100% no-repeat; }
.tb-break { width: 2px; height: 33px; background: #c4c4c4; margin-left: 1px; }
.g2 { margin-left: 4px; margin-right: 7px; }
.g3 { margin-left: 3px; margin-right: 7px; }
.ic { width: 24px; height: 24px; }
.s16 { width: 16px; height: 16px; }
.s18 { width: 18px; height: 18px; }
.s20 { width: 20px; height: 20px; }
.s22 { width: 22px; height: 22px; }
.s26 { width: 26px; height: 26px; }
.combo { width: 200px; height: 25px; background: #e6e6e6; border: 1px solid #adadad; position: relative; display: flex; align-items: center; justify-content: flex-end; padding-right: 5px; }
.combo-arrow { width: 0; height: 0; border-left: 4px solid transparent; border-right: 4px solid transparent; border-top: 4px solid #111; }

.workspace { height: 733px; display: flex; }
.left { width: 200px; flex: none; }
.dock-head { height: 23px; margin: 2px 2px 0 3px; border: 1px solid #a0a0a0; display: flex; align-items: center; padding-left: 2px; }
.dock-title { font-size: 15px; white-space: nowrap; position: relative; top: 2px; }
.dock-tools { margin-left: auto; display: flex; align-items: center; padding-right: 3px; margin-top: -1px; }
.dt { width: 12px; height: 12px; }
.dock-tools .dt:last-child { margin-left: 3px; }
.nav-list { margin: 2px 3px 0 2px; height: 308px; background: #fff; }
.nav-row { height: 25px; display: flex; align-items: center; gap: 3px; padding: 1px 0 0 3px; border-bottom: 1px solid #dcdcdc; margin: 0 1px; font-size: 15px; }
.warn { width: 18px; height: 16px; margin-top: -2px; }
.hbar, .vbar { position: relative; background: #f0f0f0; color: #606060; flex: none; }
.nav-bar { height: 25px; margin: 0 3px 0 2px; border-bottom: 1px solid #9a9a9a; }
.chev { width: 14px; height: 14px; position: absolute; color: #606060; }
.left-c { transform: rotate(-90deg); top: 5px; }
.right-c { transform: rotate(90deg); top: 5px; }
.c1 { left: 6px; }
.c2 { left: 172px; }
.c3 { left: 6px; top: 6px; }
.c4 { left: 153px; top: 6px; }
.c5 { left: 5px; top: 5px; }
.c6 { left: 1665px; top: 5px; }
.c7 { left: 6px; top: 5px; }
.c8 { left: auto; right: 5px; top: 5px; }
.up-c { top: 9px; left: 5px; }
.down-c { transform: rotate(180deg); bottom: 6px; left: 5px; }
.pale { color: #c4c4c4; }
.thumb { position: absolute; background: #cdcdcd; display: flex; align-items: center; justify-content: center; }
.handle { width: 16px; height: 15px; background: #f0f0f0; }
.t-nav { left: 26px; width: 59px; top: 0; height: 24px; }
.nav-tabs { height: 33px; display: flex; align-items: flex-start; }
.nav-tab { width: 132px; height: 33px; padding-top: 1px; background: #fff; display: flex; align-items: center; gap: 6px; padding-left: 16px; margin-left: 1px; flex: none; font-size: 15px; }
.nav-tab2 { width: 19px; height: 29px; margin-top: 2px; background: #f5f5f5; border: 1px solid #e0e0e0; flex: none; }
.tabarrow { width: 23px; height: 31px; margin-top: 2px; background: #f0f0f0; border-left: 1px solid #fff; border-top: 1px solid #fff; border-right: 1px solid #808080; border-bottom: 1px solid #808080; display: flex; align-items: center; justify-content: center; flex: none; }
.tri-left { width: 0; height: 0; border-top: 7px solid transparent; border-bottom: 7px solid transparent; border-right: 8px solid #a8a8a8; }
.tri-right { width: 0; height: 0; border-top: 7px solid transparent; border-bottom: 7px solid transparent; border-left: 8px solid #000; }
.tasks-head { margin-top: 9px; }
.flow-row { height: 32px; margin-top: 8px; display: flex; align-items: center; padding-left: 1px; font-size: 15px; }
.flow-combo { width: 30px; height: 26px; margin-left: 13px; background: #e6e6e6; border: 1px solid #adadad; display: flex; align-items: center; justify-content: space-between; padding: 0 5px 0 4px; overflow: hidden; flex: none; }
.flow-c { width: 5px; overflow: hidden; font-size: 15px; }
.btn-custom { width: 110px; height: 32px; margin-left: 10px; background: #e1e1e1; border: 1px solid #adadad; display: flex; align-items: center; justify-content: center; flex: none; font-size: 15.500px; }
.taskbox { margin-top: 10px; width: 200px; height: 256px; border: 1px solid #a0a0a0; background: #fff; display: flex; flex-direction: column; }
.task-inner { height: 229px; display: flex; }
.task-rows { width: 173px; overflow: hidden; flex: none; }
.trow { height: 23px; display: flex; border-bottom: 1px solid #e4e4e4; color: #7b8798; font-size: 15px; }
.thead { height: 37px; align-items: stretch; border-bottom: 1px solid #e4e4e4; }
.trow.last { border-bottom: 0; }
.c0 { width: 40px; flex: none; border-right: 1px solid #e4e4e4; }
.c1-cell { display: flex; align-items: center; white-space: nowrap; flex: 1; min-width: 0; overflow: hidden; }
.p50 { padding-left: 2px; }
.p70 { padding-left: 22px; }
.p104 { padding-left: 62px; }
.p107 { padding-left: 66px; }
.p90 { padding-left: 43px; }
.p90b { padding-left: 43px; }
.p125 { padding-left: 85px; }
.chev14 { width: 14px; height: 14px; color: #404040; flex: none; }
.down { transform: rotate(180deg); }
.right { transform: rotate(90deg); }
.chev14.pale { color: #a8a8a8; }
.tri { width: 12px; height: 12px; flex: none; }
.ml8 { margin-left: 8px; }
.ml6 { margin-left: 7px; }
.ml4 { margin-left: 6px; }
.ic16 { width: 18px; height: 18px; flex: none; }
.ic24 { width: 24px; height: 24px; flex: none; margin-top: 2px; }
.tl { margin-left: 7px; }
.t86 { margin-left: 9px; }
.p104 .tl { margin-left: 6px; }
.p90b .tl { margin-left: 4px; }
.tnarrow { margin-left: 5px; }
.task-v { width: 24px; height: 229px; }
.t-taskv { left: 0; width: 24px; top: 26px; height: 78px; }
.t-taskv .handle { width: 14px; }
.task-h { height: 25px; }
.t-taskh { left: 26px; width: 32px; top: 0; height: 24px; }

.editor { width: 1713px; margin-left: 7px; display: flex; flex-direction: column; }
.tabstrip { height: 32px; border-bottom: 1px solid #a0a0a0; display: flex; }
.doc-tab { width: 855px; height: 32px; background: #fff; display: flex; align-items: center; padding-left: 17px; }
.filefile { width: 24px; height: 27px; }
.doc-name { margin-left: 344px; font-size: 15.500px; width: 90px; }
.closetab { width: 14px; height: 14px; margin-left: auto; margin-right: 23px; }
.edit-tb { height: 34px; border-bottom: 1px solid #808080; padding-left: 3px; }
.edit-tb .grip { height: 24px; }
.tool-a { color: #1d4aa8; font: 700 17px "Liberation Sans", sans-serif; }
.canvas-frame { height: 667px; display: grid; grid-template-columns: 1686px 25px; grid-template-rows: 640px 25px; border-left: 1px solid #808080; border-right: 1px solid #808080; border-bottom: 1px solid #808080; }
.canvas { background: #fff; }
.main-v { width: 25px; height: 640px; }
.t-mainv { left: 0; width: 24px; top: 64px; height: 175px; }
.t-mainv .handle { width: 14px; }
.t-mainv2 { left: 0; width: 13px; top: 524px; height: 31px; }
.main-h { grid-column: 1 / 3; height: 25px; }
.t-mainh { left: 25px; width: 526px; top: 0; height: 24px; }
.t-mainh2 { left: 1527px; width: 105px; top: 0; height: 13px; }

.dotted { fill: #fff; stroke: #008474; stroke-width: 1; stroke-dasharray: 1 2; }
.outer { fill: none; stroke: #0000ff; stroke-width: 1; }
.hnd { fill: #0000ff; }
.block { fill: #fff; stroke: #000; stroke-width: 1.200; }
.pin-in path { stroke: #0090f0; stroke-width: 1; fill: none; }
.pin-in .xx { stroke-width: 2.300; }
.pin-out path { stroke: #8000ff; stroke-width: 1; fill: none; }
.pin-out .xx { stroke-width: 2.300; }
.sym-t { font: 46px "Liberation Sans", sans-serif; stroke-width: .5px; }
.purple { fill: #800080; stroke: #800080; }
.blue { fill: #0000ff; stroke: #0000ff; }
.inst { font-size: 41px; }

.messages { height: 176px; display: flex; }
.msg-side { width: 21px; height: 163px; margin: 8px 0 0 3px; border: 1px solid #a0a0a0; display: flex; flex-direction: column; align-items: center; padding-top: 2px; flex: none; gap: 2px; }
.msg-side .dt { margin: 0; }
.msg-vert { writing-mode: vertical-rl; transform: rotate(180deg); margin-top: auto; font-size: 14.500px; line-height: 18px; padding-top: 2px; }
.msg-col { width: 1893px; margin-left: 3px; }
.msg-panel { margin-top: 5px; width: 1891px; height: 146px; border: 1px solid #d8d8d8; }
.msg-tools { height: 31px; margin-top: 2px; display: flex; align-items: center; }
.all-btn { width: 36px; height: 29px; margin-left: 2px; background: #cce4f7; border: 1px solid #99c9ef; display: flex; align-items: center; justify-content: center; font-size: 15.500px; }
.msg-group { width: 113px; height: 31px; margin-left: 9px; border: 1px solid #d8d8d8; display: flex; align-items: center; gap: 11px; padding-left: 1px; }
.fbtn { width: 29px; height: 28px; background: #e1e1e1; border: 1px solid #adadad; display: flex; align-items: center; justify-content: center; flex: none; }
.fbtn.solo { margin-left: 10px; }
.msg-search { width: 340px; height: 31px; margin-left: 19px; background: #fff; border: 1px solid #7a7a7a; display: flex; align-items: center; padding-left: 6px; }
.msg-search .ic18 { width: 16px; height: 16px; margin-top: -2px; }
.ms-text { margin-left: 10px; color: #8a8a8a; font-size: 15.500px; letter-spacing: .7px; }
.ms-chev { margin-left: auto; margin-right: 5px; }
.msg-table { margin: 3px 0 0 1px; width: 1888px; height: 108px; border: 1px solid #8f9aa3; background: #fff; display: flex; flex-direction: column; }
.msg-head { height: 28px; display: flex; font: 20px/20px "Liberation Mono", monospace; }
.mh { border-right: 1px solid #e4e4e4; display: flex; justify-content: center; height: 28px; flex: none; }
.mh span { display: block; height: 12px; margin-top: 11px; overflow: hidden; line-height: 13px; white-space: nowrap; flex: none; }
.mh-type { width: 45px; padding: 0 5px 0 6px; }
.mh-type span { width: 33px; text-indent: -8px; }
.mh-id { width: 60px; }
.mh-msg { border-right: 0; padding-left: 6px; justify-content: flex-start; flex: 1; }
.msg-empty { flex: 1; }
.msg-h { height: 25px; }
.msg-tabs { display: flex; height: 23px; margin-top: 1px; }
.mtab { position: relative; display: flex; align-items: center; justify-content: center; font-size: 15px; flex: none; }
.mt-shape { position: absolute; inset: 0; width: 100%; height: 100%; }
.mtab span { position: relative; }
.mt-sys { width: 86px; height: 21px; }
.mt-proc { width: 109px; height: 20px; margin-left: 2px; }

.statusbar { height: 22px; display: flex; align-items: center; font-size: 16px; padding-left: 1724px; padding-bottom: 1px; }
.st-pos { width: 65px; white-space: nowrap; border-right: 1px solid #d0d0d0; height: 20px; line-height: 20px; }
.st-pct { margin-left: 5px; width: 59px; }
.st-time { white-space: nowrap; }

.taskbar { height: 46px; background: linear-gradient(to right, #243a44, #1e2d42); display: flex; align-items: center; color: #fff; }
.tk { width: 57px; height: 46px; display: flex; align-items: center; justify-content: center; position: relative; flex: none; }
.tk > * { margin-right: 2px; }
.narrow-tk { width: 54px; }
.narrow-tk > * { margin-right: 0; }
.first-wide { margin-left: 4px; }
.tk24 { width: 24px; height: 24px; }
.tk26 { width: 28px; height: 28px; }
.active { background: #4f6269; box-shadow: inset -7px 0 0 #3c4a52; }
.active::after, .run::after { content: ""; position: absolute; bottom: 0; left: 7px; right: 7px; height: 3px; background: #76b9ed; }
.active::after { left: 1px; right: 0; background: linear-gradient(to right, #76b9ed 0 48px, #5d93c0 48px); }
.run-split::after { background: linear-gradient(to right, #76b9ed 0 30px, #5d93c0 30px); }
.run-split2::after { background: linear-gradient(to right, #76b9ed 0 29px, #5d93c0 29px); }
.adobe { width: 20px; height: 20px; display: flex; align-items: center; justify-content: center; font: 700 12px "Open Sans", sans-serif; border: 1.500px solid; margin-top: -3px; }
.ai { color: #ff7c00; border-color: #ff7c00; background: #2e1300; }
.id { color: #ff3f9e; border-color: #ff3f9e; background: #46001f; }
.ps { color: #30c3ff; border-color: #30c3ff; background: #001d34; }
.tray { margin-left: auto; display: flex; align-items: center; padding-right: 38px; }
.tr-up { width: 18px; height: 10px; }
.tr-c1 { width: 24px; height: 16px; margin-left: 27px; }
.tr-sp { width: 22px; height: 18px; margin-left: 25px; }
.tr-c2 { width: 24px; height: 18px; margin-left: 25px; }
.tr-eng { margin-left: 22px; font-size: 16.500px; }
.tr-clock { margin-left: 21px; font-size: 17px; white-space: nowrap; }
.tr-note { width: 24px; height: 24px; margin-left: 29px; }
```
